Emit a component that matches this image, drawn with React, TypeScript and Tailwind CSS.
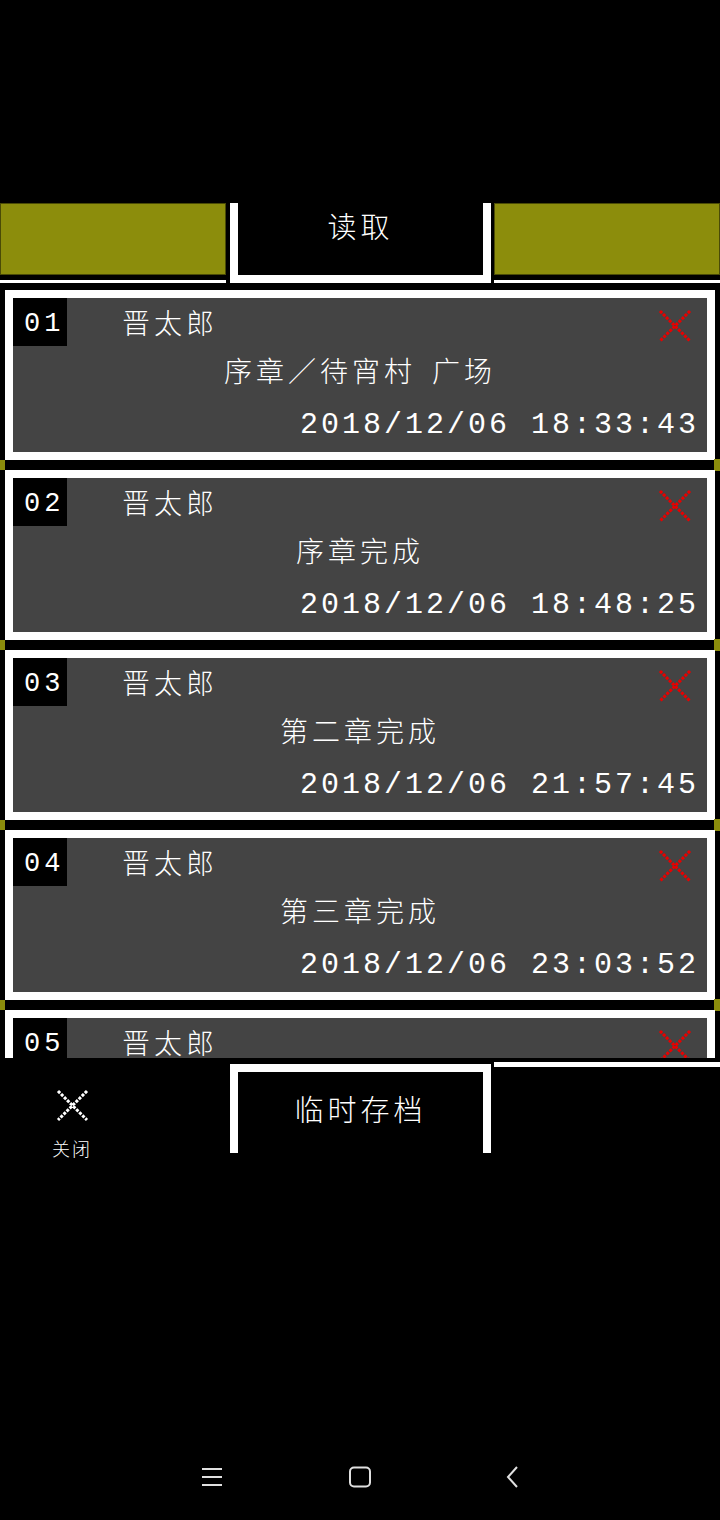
import React from "react";

type Save = { no: string; name: string; title: string; date: string };

const saves: Save[] = [
  { no: "01", name: "晋太郎", title: "序章／待宵村 广场", date: "2018/12/06 18:33:43" },
  { no: "02", name: "晋太郎", title: "序章完成", date: "2018/12/06 18:48:25" },
  { no: "03", name: "晋太郎", title: "第二章完成", date: "2018/12/06 21:57:45" },
  { no: "04", name: "晋太郎", title: "第三章完成", date: "2018/12/06 23:03:52" },
  { no: "05", name: "晋太郎", title: "", date: "" },
];

function RedX() {
  return (
    <svg width="34" height="34" viewBox="0 0 34 34">
      <path d="M2 2 L32 32 M32 2 L2 32" stroke="#e80000" strokeWidth="3" strokeDasharray="3 1.3" />
    </svg>
  );
}

function WhiteX() {
  return (
    <svg width="33" height="33" viewBox="0 0 33 33">
      <path d="M2 2 L31 31 M31 2 L2 31" stroke="#ffffff" strokeWidth="3" strokeDasharray="3 1.3" />
    </svg>
  );
}

function Card({ s }: { s: Save }) {
  return (
    <div className="mx-[5px] h-[170px] shrink-0 border-8 border-white bg-[#444444] flex flex-col">
      <div className="h-[48px] shrink-0 flex">
        <div className="w-[54px] h-[48px] bg-black flex items-center pl-[11px] pt-[4px] text-white text-[27px] tracking-[4px] font-['Liberation_Mono',monospace]">
          {s.no}
        </div>
        <div className="ml-[55px] flex items-center text-white text-[28px] tracking-[4px] font-light font-['Noto_Sans_CJK_SC',sans-serif]">
          {s.name}
        </div>
        <div className="ml-auto mt-[11px] mr-[15px] h-[34px]">
          <RedX />
        </div>
      </div>
      <div className="h-[48px] shrink-0 flex items-center justify-center text-white text-[28px] tracking-[4px] [word-spacing:6px] font-light font-['Noto_Sans_CJK_SC',sans-serif]">
        {s.title}
      </div>
      <div className="h-[56px] shrink-0 flex items-center justify-end pr-[8px] pt-[6px] text-white text-[30px] tracking-[3px] font-['Liberation_Mono',monospace]">
        {s.date}
      </div>
    </div>
  );
}

function Gap() {
  return (
    <div className="h-[10px] shrink-0 flex items-center justify-between">
      <div className="w-[5px] h-[10px] bg-[#8c8d0c]" />
      <div className="w-[6px] h-[12px] bg-[#8c8d0c]" />
    </div>
  );
}

export default function App() {
  return (
    <div className="w-[720px] h-[1520px] bg-black overflow-hidden flex flex-col pt-[203px] font-['Noto_Sans_CJK_SC',sans-serif]">
      {/* header */}
      <div className="h-[80px] shrink-0 flex">
        <div className="w-[226px] flex flex-col">
          <div className="h-[72px] bg-[#8c8d0c] border border-[#4a4b06]" />
          <div className="mt-[5px] h-[3px] bg-white" />
        </div>
        <div className="ml-[4px] w-[261px] border-x-8 border-b-8 border-white bg-black flex items-start justify-center pt-[2px]">
          <span className="text-white text-[29px] tracking-[4px] font-light leading-[40px]">读取</span>
        </div>
        <div className="ml-[3px] flex-1 flex flex-col">
          <div className="h-[72px] bg-[#8c8d0c] border border-[#4a4b06]" />
          <div className="mt-[5px] h-[3px] bg-white" />
        </div>
      </div>

      {/* list */}
      <div className="mt-[7px] h-[768px] shrink-0 overflow-hidden flex flex-col">
        {saves.map((s, i) => (
          <React.Fragment key={s.no}>
            {i > 0 && <Gap />}
            <Card s={s} />
          </React.Fragment>
        ))}
      </div>

      {/* bottom bar */}
      <div className="h-[95px] shrink-0 flex">
        <div className="w-[226px] flex flex-col">
          <div className="mt-[5px] h-[4px] bg-white" />
          <div className="w-[144px] flex flex-col items-center">
            <div className="mt-[26px] h-[33px]">
              <WhiteX />
            </div>
            <div className="mt-[14px] text-white text-[18px] tracking-[2px] leading-[24px] font-light">关闭</div>
          </div>
        </div>
        <div className="ml-[4px] mt-[6px] w-[261px] h-[89px] border-x-8 border-t-8 border-white bg-black flex justify-center pt-[16px]">
          <span className="text-white text-[29px] tracking-[4px] font-light leading-[40px]">临时存档</span>
        </div>
        <div className="ml-[3px] flex-1">
          <div className="mt-[4px] h-[5px] bg-white" />
        </div>
      </div>

      <div className="flex-1" />

      {/* nav bar */}
      <div className="h-[86px] shrink-0 flex items-center">
        <div className="ml-[192px] w-[40px] flex justify-center">
          <svg width="22" height="20" viewBox="0 0 22 20">
            <path d="M1 2 H21 M1 10 H21 M1 18 H21" stroke="#e0e0e0" strokeWidth="2" />
          </svg>
        </div>
        <div className="ml-[108px] w-[40px] flex justify-center">
          <svg width="24" height="22" viewBox="0 0 24 22">
            <rect x="2" y="1.5" width="20" height="19" rx="4" fill="none" stroke="#e0e0e0" strokeWidth="2" />
          </svg>
        </div>
        <div className="ml-[112px] w-[40px] flex justify-center">
          <svg width="14" height="24" viewBox="0 0 14 24">
            <path d="M12 2 L3 12 L12 22" fill="none" stroke="#e0e0e0" strokeWidth="2" />
          </svg>
        </div>
      </div>
    </div>
  );
}
